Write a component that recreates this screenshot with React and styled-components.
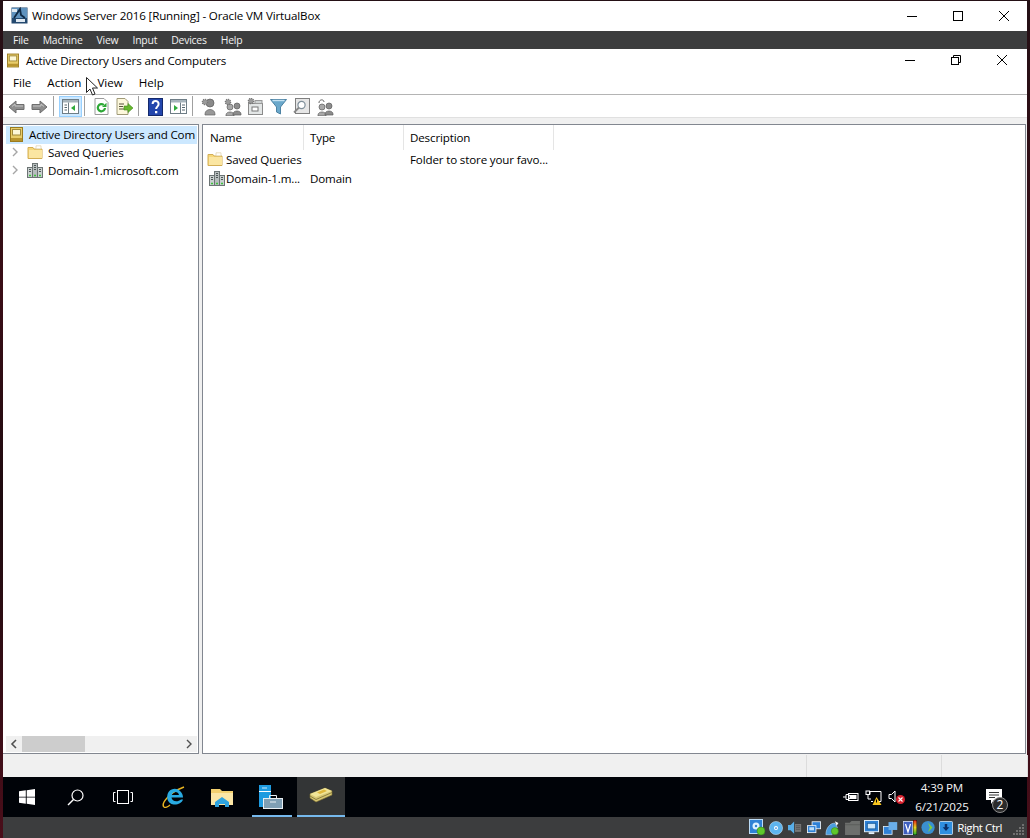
import React from 'react'
import styled, { createGlobalStyle } from 'styled-components'

const uiFont = '"Open Sans", "Noto Sans", "Liberation Sans", sans-serif'

const Global = createGlobalStyle`
  html, body { margin: 0; padding: 0; height: 100%; }
  body { background: #1c0a0e; font-family: ${uiFont}; overflow: hidden; }
  svg { flex: none; display: block; }
`

const Desktop = styled.div`
  width: 1030px;
  height: 838px;
  display: flex;
  justify-content: flex-start;
  padding: 1px 3px 0 3px;
  box-sizing: border-box;
  position: relative;
  background: linear-gradient(180deg, #241015 0%, #3a0d16 35%, #1d0b0f 60%, #4a0e1a 100%);
`

const Vm = styled.div`
  width: 1024px;
  height: 837px;
  display: flex;
  flex-direction: column;
  background: #fff;
`

const HostTitle = styled.div`
  height: 30px;
  flex: none;
  display: flex;
  align-items: center;
  padding: 0 0 1px 8px;
  box-sizing: border-box;
  background: #fff;
  color: #000;
  font-size: 11.6px;
  letter-spacing: -0.15px;
`

const TitleText = styled.span`
  margin-left: ${p => p.$gap}px;
  flex: 1;
  white-space: nowrap;
`

const WinButtons = styled.div`
  display: flex;
  align-items: center;
  margin-right: ${p => p.$right}px;
`

const WinButton = styled.span`
  width: ${p => p.$w}px;
  height: 20px;
  display: flex;
  align-items: center;
  justify-content: center;
`

const HostMenu = styled.div`
  height: 18px;
  flex: none;
  display: flex;
  align-items: center;
  padding-left: 3px;
  background: #3c3d3e;
  color: #f2f2f2;
  font-size: 10.4px;
  letter-spacing: -0.2px;
`

const HostMenuItem = styled.span`
  padding: 0 7px;
`

const MmcTitle = styled.div`
  height: 22px;
  flex: none;
  display: flex;
  align-items: center;
  padding-left: 4px;
  color: #000;
  font-size: 11.6px;
  letter-spacing: -0.15px;
`

const MmcMenu = styled.div`
  height: 24px;
  flex: none;
  display: flex;
  align-items: center;
  padding: 0 0 0 2px;
  border-bottom: 1px solid #b4b4b4;
  box-sizing: border-box;
  color: #000;
  font-size: 11.6px;
`

const MmcMenuItem = styled.span`
  padding: 0 8px;
`

const Toolbar = styled.div`
  height: 22px;
  flex: none;
  display: flex;
  align-items: flex-start;
  padding: 1px 0 0 2px;
  box-sizing: border-box;
  background: #fff;
`

const ToolButton = styled.span`
  width: 23px;
  height: 21px;
  display: flex;
  align-items: center;
  justify-content: center;
  box-sizing: border-box;
  border: 1px solid ${p => (p.$active ? '#99d1ff' : 'transparent')};
  background: ${p => (p.$active ? '#cce8ff' : 'transparent')};
`

const ToolSep = styled.span`
  width: 1px;
  height: 20px;
  margin: 0 5px 0 2px;
  background: #a0a0a0;
`

const Strip = styled.div`
  height: 6px;
  flex: none;
  background: #f0f0f0;
  border-top: 1px solid #e0e0e0;
`

const Panes = styled.div`
  flex: 1;
  min-height: 0;
  display: flex;
  gap: 3px;
  background: #f0f0f0;
`

const TreePane = styled.div`
  width: 196px;
  flex: none;
  display: flex;
  flex-direction: column;
  box-sizing: border-box;
  background: #fff;
  border: 1px solid #828790;
  border-left: none;
  padding: 0 1px 1px 3px;
`

const TreeBody = styled.div`
  flex: 1;
  min-height: 0;
  overflow: hidden;
  font-size: 11.6px;
  letter-spacing: -0.15px;
  color: #000;
`

const TreeRow = styled.div`
  height: 18px;
  display: flex;
  align-items: center;
  box-sizing: border-box;
  white-space: nowrap;
  overflow: hidden;
  padding: 0 0 2px ${p => p.$indent}px;
  background: ${p => (p.$selected ? '#cce8ff' : 'transparent')};
  margin-top: ${p => (p.$selected ? 1 : 0)}px;
`

const Chevron = styled.span`
  width: 8px;
  display: flex;
  margin-left: 5px;
  margin-right: 8px;
`

const RowLabel = styled.span`
  margin-left: ${p => p.$gap}px;
`

const HScroll = styled.div`
  height: 16px;
  flex: none;
  display: flex;
  align-items: center;
  justify-content: space-between;
  background: #f0f0f0;
`

const ScrollArrow = styled.span`
  width: 16px;
  display: flex;
  justify-content: center;
`

const ScrollTrack = styled.div`
  flex: 1;
  height: 16px;
`

const ScrollThumb = styled.div`
  width: 63px;
  height: 16px;
  background: #cdcdcd;
`

const ListPane = styled.div`
  flex: 1;
  min-width: 0;
  box-sizing: border-box;
  background: #fff;
  border: 1px solid #828790;
  margin-right: 1px;
  font-size: 11.6px;
  letter-spacing: -0.15px;
  color: #000;
`

const ListHeader = styled.div`
  height: 25px;
  display: flex;
`

const HeadCell = styled.div`
  width: ${p => p.$w}px;
  flex: none;
  box-sizing: border-box;
  padding: 5px 0 0 ${p => p.$pad}px;
  border-right: 1px solid #e5e5e5;
`

const ListRow = styled.div`
  height: 18px;
  display: flex;
  align-items: center;

  & + & {
    margin-top: 1px;
  }
`

const NameCell = styled.div`
  width: 100px;
  flex: none;
  display: flex;
  align-items: center;
  padding-left: ${p => p.$pad}px;
  box-sizing: border-box;
  white-space: nowrap;
`

const Cell = styled.div`
  width: ${p => p.$w}px;
  flex: none;
  box-sizing: border-box;
  padding-left: 7px;
  white-space: nowrap;
`

const StatusBar = styled.div`
  height: 23px;
  flex: none;
  display: flex;
  background: #f0f0f0;
  padding-top: 1px;
  box-sizing: border-box;
`

const StatusCell = styled.div`
  width: ${p => p.$w}px;
  flex: none;
  border-right: 1px solid #dcdcdc;
`

const Taskbar = styled.div`
  height: 40px;
  flex: none;
  display: flex;
  align-items: stretch;
  background: #000308;
  color: #fff;
`

const TaskButton = styled.span`
  width: 48px;
  flex: none;
  display: flex;
  align-items: center;
  justify-content: center;
  position: relative;
  box-sizing: border-box;
  margin-left: ${p => p.$ml || 0}px;
  background: ${p => (p.$active ? '#333536' : 'transparent')};
  border-bottom: 2px solid ${p => (p.$open ? '#76b9ed' : 'transparent')};
  padding-top: 2px;
`

const TaskOpenLine = styled.span`
  position: absolute;
  left: 5px;
  right: 3px;
  bottom: -2px;
  height: 2px;
  background: #76b9ed;
`

const Tray = styled.div`
  margin-left: auto;
  display: flex;
  align-items: center;
  padding-right: 18px;
`

const TrayIcon = styled.span`
  width: 23px;
  display: flex;
  justify-content: center;
`

const Clock = styled.div`
  width: 66px;
  margin: 0 4px 0 1px;
  text-align: center;
  font-size: 11.6px;
  letter-spacing: -0.15px;
  line-height: 19px;
  color: #f4f4f4;
`

const Notify = styled.span`
  position: relative;
  width: 30px;
  display: flex;
  justify-content: center;
`

const NotifyBadge = styled.span`
  position: absolute;
  left: 13px;
  top: 8px;
  width: 14px;
  height: 14px;
  border-radius: 50%;
  border: 1px solid #8c8c8c;
  background: #2b2b2b;
  color: #fff;
  font-size: 12px;
  line-height: 14px;
  text-align: center;
`

const HostStatus = styled.div`
  height: 21px;
  flex: none;
  display: flex;
  align-items: center;
  justify-content: flex-end;
  background: #3c3d3e;
  color: #fff;
  font-size: 11.6px;
  letter-spacing: -0.5px;
`

const HostIcon = styled.span`
  width: ${p => p.$w}px;
  margin-right: ${p => p.$mr || 0}px;
  display: flex;
  justify-content: center;
`

const HostKey = styled.span`
  margin: 0 10px 0 1px;
  white-space: nowrap;
`

const Grip = styled.span`
  width: 13px;
  height: 13px;
  margin: 6px 2px 0 0;
  display: flex;
`

const Pointer = styled.svg`
  position: absolute;
  left: 86px;
  top: 77px;
`

// ---- icons

const Min = () => (
  <svg width="12" height="12" viewBox="0 0 12 12"><path d="M1 6.500h10" stroke="#000" strokeWidth="1" /></svg>
)
const Max = () => (
  <svg width="12" height="12" viewBox="0 0 12 12"><rect x="1.500" y="1.500" width="9" height="9" fill="none" stroke="#000" /></svg>
)
const Restore = () => (
  <svg width="12" height="12" viewBox="0 0 12 12" fill="none" stroke="#000"><rect x="1.500" y="3.500" width="7" height="7" /><path d="M3.500 3.500v-2h7v7h-2" /></svg>
)
const Close = () => (
  <svg width="12" height="12" viewBox="0 0 12 12"><path d="M1 1l10 10M11 1L1 11" stroke="#000" /></svg>
)

const VBoxLogo = () => (
  <svg width="17" height="17" viewBox="0 0 17 17">
    <rect x="0.500" y="0.500" width="16" height="16" fill="#24496f" />
    <rect x="1" y="1" width="15" height="10" fill="#5f92be" />
    <path d="M3 11L9 2l1 6 4 3" stroke="#102a45" strokeWidth="1.800" fill="none" />
    <rect x="1" y="2" width="5" height="3" fill="#dfe9f2" />
    <rect x="5" y="12" width="9" height="3" fill="#dfe9f2" />
  </svg>
)

const AducBook = ({ w = 13, h = 15 }) => (
  <svg width={w} height={h} viewBox="0 0 13 15">
    <rect x="0.500" y="0.500" width="12" height="14" fill="#e8cd6a" stroke="#9a7b20" />
    <rect x="2.500" y="2.500" width="8" height="5.500" fill="#fdf8d8" stroke="#a08a3a" />
    <rect x="1" y="11" width="11" height="3" fill="#b8952e" />
  </svg>
)

const Folder = () => (
  <svg width="16" height="14" viewBox="0 0 16 14">
    <path d="M1 2.500h5l1 1.500h8v9.500H1z" fill="#f6d87a" stroke="#d3ae55" />
    <path d="M2 5h13v8H2z" fill="#fbe6a2" />
    <path d="M9 .8h5v3H9z" fill="#fff" stroke="#d6c79a" strokeWidth=".6" />
  </svg>
)

const DomainIcon = () => (
  <svg width="16" height="15" viewBox="0 0 16 15">
    <rect x="5.500" y="0.500" width="5" height="14" fill="#b6bdbd" stroke="#6c7474" />
    <rect x="0.500" y="4.500" width="5" height="10" fill="#c9d0cf" stroke="#6c7474" />
    <rect x="10.500" y="4.500" width="5" height="10" fill="#c9d0cf" stroke="#6c7474" />
    <path d="M2 6.500h2M2 8.500h2M7 2.500h2M7 4.500h2M7 6.500h2M12 6.500h2M12 8.500h2" stroke="#4d5656" />
    <path d="M2 12.500h2M7 12.500h2M12 12.500h2" stroke="#3fc43f" strokeWidth="1.400" />
  </svg>
)

const ChevronRight = ({ color = '#a6a6a6' }) => (
  <svg width="8" height="10" viewBox="0 0 8 10"><path d="M2 1l4 4-4 4" fill="none" stroke={color} strokeWidth="1.400" /></svg>
)
const ChevronLeft = ({ color = '#505050' }) => (
  <svg width="8" height="10" viewBox="0 0 8 10"><path d="M6 1L2 5l4 4" fill="none" stroke={color} strokeWidth="1.600" /></svg>
)

const BackArrow = ({ flip }) => (
  <svg width="17" height="14" viewBox="0 0 17 14" style={flip ? { transform: 'scaleX(-1)' } : undefined}>
    <path d="M1 7l7-6v3.500h8v5H8V13z" fill="#8e8e8e" stroke="#6e6e6e" />
    <path d="M4 6.500l3-2.500v2h8" fill="none" stroke="#c4c4c4" />
  </svg>
)

const ConsolePane = ({ side }) => (
  <svg width="17" height="15" viewBox="0 0 17 15">
    <rect x="0.500" y="0.500" width="16" height="14" fill="#fff" stroke="#6e7d86" />
    <rect x="1" y="1" width="15" height="2.500" fill="#a7b4bc" />
    {side === 'left' ? (
      <>
        <path d="M6.500 3.500v11" stroke="#6e7d86" />
        <path d="M2.500 6h2.500M2.500 8.500h2.500M2.500 11h2.500" stroke="#55656e" />
        <path d="M13 6v6L9 9z" fill="#2faa3c" />
      </>
    ) : (
      <>
        <path d="M10.500 3.500v11" stroke="#6e7d86" />
        <path d="M12 6h3M12 8.500h3M12 11h3" stroke="#55656e" />
        <path d="M4 6v6l4-3z" fill="#2faa3c" />
      </>
    )}
  </svg>
)

const Refresh = () => (
  <svg width="15" height="17" viewBox="0 0 15 17">
    <path d="M1 .5h9l4 4v12H1z" fill="#fff" stroke="#9a9a9a" />
    <path d="M11 10a3.600 3.600 0 1 1-1.200-3" fill="none" stroke="#2ea836" strokeWidth="2.200" />
    <path d="M8 9h4.500V4.800z" fill="#2ea836" />
  </svg>
)

const ExportList = () => (
  <svg width="18" height="17" viewBox="0 0 18 17">
    <path d="M1 .5h8l3 3v13H1z" fill="#fdf8dc" stroke="#a09a78" />
    <path d="M3 6h5M3 8.500h4M3 11h5" stroke="#55513a" />
    <path d="M8 8h4V5.500L17 10l-5 4.500V12H8z" fill="#68b82e" stroke="#3f8a1a" strokeWidth=".6" />
  </svg>
)

const HelpBook = () => (
  <svg width="15" height="18" viewBox="0 0 15 18">
    <rect x="0.500" y="0.500" width="14" height="17" fill="#2346ad" stroke="#14296b" />
    <path d="M4.600 6c0-4 6-4 6 0 0 2.600-2.500 2.600-2.500 5" fill="none" stroke="#fff" strokeWidth="2" />
    <rect x="7" y="13" width="2.300" height="2.300" fill="#fff" />
  </svg>
)

const UserGlyph = ({ x, y, fill }) => (
  <g transform={`translate(${x} ${y})`}>
    <circle cx="4" cy="3" r="3" fill={fill} stroke="#5c5c5c" strokeWidth=".7" />
    <path d="M0 11c0-4 8-4 8 0v1H0z" fill={fill} stroke="#5c5c5c" strokeWidth=".7" />
  </g>
)

const Gear = ({ x, y }) => (
  <g transform={`translate(${x} ${y})`}>
    <circle r="2.600" fill="#9c9c9c" stroke="#777" strokeDasharray="1.200 .8" strokeWidth="1.400" />
  </g>
)

const UserTool = () => (
  <svg width="17" height="18" viewBox="0 0 17 18">
    <circle cx="9" cy="5" r="4" fill="#8a8a8a" stroke="#5c5c5c" strokeWidth=".7" />
    <path d="M4 16c0-6 10-6 10 0v1H4z" fill="#989898" stroke="#666" strokeWidth=".7" />
    <Gear x={4} y={4} />
  </svg>
)

const GroupTool = () => (
  <svg width="18" height="18" viewBox="0 0 18 18">
    <UserGlyph x={2} y={6} fill="#a8a8a8" />
    <UserGlyph x={9} y={5} fill="#8c8c8c" />
    <Gear x={4} y={4} />
  </svg>
)

const OuTool = () => (
  <svg width="17" height="18" viewBox="0 0 17 18">
    <rect x="1.500" y="5.500" width="14" height="11" fill="#e3e6e6" stroke="#8a8a8a" />
    <rect x="5" y="9" width="6" height="4" fill="#fff" stroke="#777" />
    <rect x="8" y="2.500" width="7" height="3" fill="#d0d4d4" stroke="#999" />
    <Gear x={4} y={3} />
  </svg>
)

const Filter = () => (
  <svg width="17" height="17" viewBox="0 0 17 17">
    <path d="M.5 1.500h16L10.500 9v7l-4-2V9z" fill="#6aa8cb" stroke="#4d82a3" />
    <path d="M2.500 2.500h12" stroke="#c5e2f2" strokeWidth="1.400" />
  </svg>
)

const FindTool = () => (
  <svg width="17" height="17" viewBox="0 0 17 17">
    <rect x="2.500" y="0.500" width="14" height="15" fill="#e6e6e6" stroke="#7f7f7f" />
    <circle cx="8.500" cy="7" r="3.600" fill="#fff" stroke="#7f8f9a" strokeWidth="1.200" />
    <path d="M6 9.500L1 14.500" stroke="#888" strokeWidth="1.800" />
  </svg>
)

const MoveTool = () => (
  <svg width="18" height="18" viewBox="0 0 18 18">
    <path d="M3 5c0-4 5-4 5-1" fill="none" stroke="#666" />
    <UserGlyph x={2} y={6} fill="#a8a8a8" />
    <UserGlyph x={9} y={5} fill="#8c8c8c" />
  </svg>
)

const WindowsLogo = () => (
  <svg width="16" height="16" viewBox="0 0 16 16" fill="#fff">
    <path d="M0 2.300l6.800-1v6.400H0zM7.700 1.200L16 0v7.700H7.700zM0 8.400h6.800v6.300L0 13.700zM7.700 8.400H16V16l-8.300-1.200z" />
  </svg>
)

const SearchIcon = () => (
  <svg width="17" height="17" viewBox="0 0 17 17" fill="none" stroke="#fff">
    <circle cx="10.500" cy="6.500" r="5.500" strokeWidth="1.200" />
    <path d="M6.500 10.500L1 16" strokeWidth="1.500" />
  </svg>
)

const TaskViewIcon = () => (
  <svg width="20" height="14" viewBox="0 0 20 14" fill="none" stroke="#fff">
    <rect x="4.500" y="0.500" width="11" height="13" />
    <path d="M2.500 2.500H.5v9h2M17.500 2.500h2v9h-2" />
  </svg>
)

const IeIcon = () => (
  <svg width="24" height="24" viewBox="0 0 24 24">
    <path d="M2 22c-3-3 4-14 20-20" fill="none" stroke="#e9b521" strokeWidth="1.500" />
    <path d="M21 12.500H9.500c.3 4 6 5 9.500 2h2c-2 6-13 7.500-15.500 0C3.500 5 13 1 18 6c2 2 3 4 3 6.500zM9.800 10H17c-.5-4-6.500-4-7.200 0z" fill="#29abe2" fillRule="evenodd" />
    <path d="M2 22c1 1 4 0 6-2" fill="none" stroke="#e9b521" strokeWidth="1.200" />
  </svg>
)

const ExplorerIcon = () => (
  <svg width="22" height="19" viewBox="0 0 22 19">
    <path d="M0 1h9l2 2h11v14H0z" fill="#f3d06f" />
    <path d="M0 5h22v12H0z" fill="#fbe6a6" />
    <path d="M4 19v-5h14v5h-4v-3H8v3zM4 14l7-5 7 5z" fill="#2fa4e0" />
  </svg>
)

const ServerManagerIcon = () => (
  <svg width="24" height="24" viewBox="0 0 24 24">
    <rect x="0" y="0" width="12" height="22" fill="#1e9be0" />
    <path d="M0 6.500h12" stroke="#fff" />
    <rect x="3" y="2.500" width="5" height="1" fill="#cfeafa" />
    <rect x="4.500" y="13.500" width="19" height="10" fill="#7f9fb4" stroke="#e8eef2" />
    <path d="M10.500 13v-2.500h7V13M11 17h6" fill="none" stroke="#e8eef2" />
  </svg>
)

const AducTask = () => (
  <svg width="24" height="16" viewBox="0 0 24 16" style={{ marginTop: -5 }}>
    <path d="M1 7L16 1l7 3v4L7 15l-6-4z" fill="#d8c874" stroke="#7d6f30" strokeWidth=".6" />
    <path d="M1 7l6 3 16-6-7-3z" fill="#f1e598" />
    <path d="M8 5.500l7-3 3 1.500-7 3z" fill="#e0b83c" />
    <path d="M1 9l6 3.500 16-7" fill="none" stroke="#8f8140" />
  </svg>
)

const PlugBattery = () => (
  <svg width="16" height="12" viewBox="0 0 16 12">
    <path d="M0 6h3M3 3.500h3v5H3zM6 4.500h1M6 7.500h1" stroke="#fff" fill="none" />
    <rect x="5.500" y="2.500" width="9.500" height="7" fill="none" stroke="#fff" />
    <rect x="7" y="4" width="6.500" height="4" fill="#fff" />
  </svg>
)

const NetworkWarn = () => (
  <svg width="17" height="15" viewBox="0 0 17 15">
    <path d="M5 1.500h11v10h-4M5 1.500v3M8 11.500H6" fill="none" stroke="#fff" />
    <rect x="1" y="1" width="3.500" height="3.500" fill="none" stroke="#fff" />
    <path d="M3 5v4h3" fill="none" stroke="#fff" />
    <path d="M11.500 7l5 8h-9z" fill="#f7c51e" />
    <path d="M11.500 9.500v3" stroke="#000" />
  </svg>
)

const MutedSpeaker = () => (
  <svg width="17" height="14" viewBox="0 0 17 14">
    <path d="M1 4.500h2.500L7 1v11L3.500 8.500H1z" fill="none" stroke="#fff" />
    <circle cx="12.500" cy="9.500" r="4.500" fill="#d8232f" />
    <path d="M10.500 7.500l4 4M14.500 7.500l-4 4" stroke="#fff" strokeWidth="1.100" />
  </svg>
)

const ActionCenter = () => (
  <svg width="17" height="16" viewBox="0 0 17 16">
    <path d="M0 0h16v11H8l-3 4v-4H0z" fill="#fff" />
    <path d="M3 3.500h10M3 6h10M3 8.500h6" stroke="#333" />
  </svg>
)

const GreenDot = ({ x, y }) => <circle cx={x} cy={y} r="4" fill="#5ec72c" stroke="#2f7d17" strokeWidth=".5" />

const DiskIcon = () => (
  <svg width="17" height="17" viewBox="0 0 17 17">
    <rect x="0.500" y="0.500" width="13" height="14" fill="#2f81d6" stroke="#bcdcf7" />
    <circle cx="7" cy="7" r="3.500" fill="#dcefff" />
    <circle cx="7" cy="7" r="1.200" fill="#2f81d6" />
    <GreenDot x={12} y={12} />
  </svg>
)
const OpticalIcon = () => (
  <svg width="14" height="14" viewBox="0 0 16 16">
    <circle cx="8" cy="8" r="7.500" fill="#5db4ef" stroke="#cfe9fb" strokeWidth=".6" />
    <circle cx="8" cy="8" r="2.300" fill="#fff" />
    <circle cx="8" cy="8" r="1" fill="#2f81d6" />
  </svg>
)
const AudioHost = () => (
  <svg width="14" height="15" viewBox="0 0 16 16">
    <path d="M0 5h3l4-4v14l-4-4H0z" fill="#58aee8" />
    <rect x="8" y="4" width="7" height="9" fill="#777" />
    <path d="M9 6h5M9 8h5M9 10h5" stroke="#555" />
  </svg>
)
const NetHost = () => (
  <svg width="14" height="14" viewBox="0 0 18 17">
    <rect x="6.500" y="0.500" width="11" height="9" fill="#2f81d6" stroke="#fff" />
    <rect x="0.500" y="5.500" width="11" height="9" fill="#2f81d6" stroke="#fff" />
    <rect x="3" y="7.500" width="6" height="4" fill="#bfe0fa" />
  </svg>
)
const UsbHost = () => (
  <svg width="17" height="16" viewBox="0 0 19 17">
    <path d="M1 16C1 8 6 3 11 3l3 5c-3 0-6 3-6 8z" fill="#4a9de0" stroke="#bcdcf7" strokeWidth=".6" />
    <path d="M11 1l4 2-2 3z" fill="#fff" />
    <GreenDot x={11} y={12} />
  </svg>
)
const GreyFolder = () => (
  <svg width="15" height="14" viewBox="0 0 16 15">
    <path d="M0 2h5l2-2h9v15H0z" fill="#6d6f6d" />
    <path d="M0 4h16" stroke="#5a5c5a" />
  </svg>
)
const ScreenHost = () => (
  <svg width="15" height="15" viewBox="0 0 16 16">
    <rect x="0.500" y="0.500" width="15" height="12" fill="#2f81d6" stroke="#e5f2fc" />
    <rect x="3.500" y="3.500" width="9" height="6" fill="#cfe6f9" stroke="#1b5f9f" />
    <rect x="5" y="13" width="6" height="2" fill="#e5f2fc" />
  </svg>
)
const CaptureHost = () => (
  <svg width="15" height="14" viewBox="0 0 19 17">
    <rect x="0.500" y="6.500" width="11" height="10" fill="#2f81d6" stroke="#e5f2fc" />
    <rect x="7" y="1" width="11" height="10" fill="#6aaee8" />
  </svg>
)
const VtHost = () => (
  <svg width="10" height="14" viewBox="0 0 14 16" preserveAspectRatio="none">
    <rect x="0.500" y="0.500" width="13" height="15" fill="#3f5fbf" stroke="#ccd5f2" />
    <path d="M3.500 3.500l3.500 9 3.500-9" fill="none" stroke="#fff" strokeWidth="1.800" />
  </svg>
)
const Meter = () => (
  <svg width="4" height="15" viewBox="0 0 4 16" preserveAspectRatio="none">
    <defs>
      <linearGradient id="meter" x1="0" y1="0" x2="0" y2="1">
        <stop offset="0" stopColor="#e0201c" />
        <stop offset=".5" stopColor="#e8d020" />
        <stop offset="1" stopColor="#20b030" />
      </linearGradient>
    </defs>
    <rect width="4" height="16" fill="url(#meter)" stroke="#000" strokeWidth=".8" />
  </svg>
)
const GlobeHost = () => (
  <svg width="15" height="15" viewBox="0 0 17 17">
    <circle cx="8" cy="8.500" r="7.500" fill="#3a8fd0" />
    <path d="M8 3l5 5.500L8 14l2-5.500z" fill="#7fd03c" />
  </svg>
)
const KeyHost = () => (
  <svg width="14" height="14" viewBox="0 0 17 17">
    <rect x="0.500" y="0.500" width="16" height="16" rx="1.500" fill="#2f8fe0" stroke="#d8ecfb" />
    <path d="M7 3.500h3v4h2.500l-4 4.500-4-4.500H7z" fill="#0c2f66" />
  </svg>
)
const GripDots = () => (
  <svg width="13" height="13" viewBox="0 0 13 13" fill="#707070">
    <rect x="10" y="0" width="2" height="2" /><rect x="7" y="3" width="2" height="2" /><rect x="10" y="3" width="2" height="2" />
    <rect x="4" y="6" width="2" height="2" /><rect x="7" y="6" width="2" height="2" /><rect x="10" y="6" width="2" height="2" />
    <rect x="1" y="9" width="2" height="2" /><rect x="4" y="9" width="2" height="2" /><rect x="7" y="9" width="2" height="2" /><rect x="10" y="9" width="2" height="2" />
  </svg>
)

const hostMenu = ['File', 'Machine', 'View', 'Input', 'Devices', 'Help']
const mmcMenu = ['File', 'Action', 'View', 'Help']

export default function App() {
  return (
    <Desktop>
      <Global />
      <Vm>
        <HostTitle>
          <VBoxLogo />
          <TitleText $gap={4}>Windows Server 2016 [Running] - Oracle VM VirtualBox</TitleText>
          <WinButtons $right={0}>
            <WinButton $w={46}><Min /></WinButton>
            <WinButton $w={46}><Max /></WinButton>
            <WinButton $w={46}><Close /></WinButton>
          </WinButtons>
        </HostTitle>
        <HostMenu>
          {hostMenu.map(m => <HostMenuItem key={m}>{m}</HostMenuItem>)}
        </HostMenu>
        <MmcTitle>
          <AducBook w={12} h={15} />
          <TitleText $gap={7}>Active Directory Users and Computers</TitleText>
          <WinButtons $right={2}>
            <WinButton $w={46}><Min /></WinButton>
            <WinButton $w={46}><Restore /></WinButton>
            <WinButton $w={46}><Close /></WinButton>
          </WinButtons>
        </MmcTitle>
        <MmcMenu>
          {mmcMenu.map(m => <MmcMenuItem key={m}>{m}</MmcMenuItem>)}
        </MmcMenu>
        <Toolbar>
          <ToolButton><BackArrow /></ToolButton>
          <ToolButton><BackArrow flip /></ToolButton>
          <ToolSep />
          <ToolButton $active><ConsolePane side="left" /></ToolButton>
          <ToolSep />
          <ToolButton><Refresh /></ToolButton>
          <ToolButton><ExportList /></ToolButton>
          <ToolSep />
          <ToolButton><HelpBook /></ToolButton>
          <ToolButton><ConsolePane side="right" /></ToolButton>
          <ToolSep />
          <ToolButton><UserTool /></ToolButton>
          <ToolButton><GroupTool /></ToolButton>
          <ToolButton><OuTool /></ToolButton>
          <ToolButton><Filter /></ToolButton>
          <ToolButton><FindTool /></ToolButton>
          <ToolButton><MoveTool /></ToolButton>
        </Toolbar>
        <Strip />
        <Panes>
          <TreePane>
            <TreeBody>
              <TreeRow $selected $indent={4}>
                <AducBook />
                <RowLabel $gap={6}>Active Directory Users and Com</RowLabel>
              </TreeRow>
              <TreeRow $indent={0}>
                <Chevron><ChevronRight /></Chevron>
                <Folder />
                <RowLabel $gap={5}>Saved Queries</RowLabel>
              </TreeRow>
              <TreeRow $indent={0}>
                <Chevron><ChevronRight /></Chevron>
                <DomainIcon />
                <RowLabel $gap={5}>Domain-1.microsoft.com</RowLabel>
              </TreeRow>
            </TreeBody>
            <HScroll>
              <ScrollArrow><ChevronLeft /></ScrollArrow>
              <ScrollTrack><ScrollThumb /></ScrollTrack>
              <ScrollArrow><ChevronRight color="#505050" /></ScrollArrow>
            </HScroll>
          </TreePane>
          <ListPane>
            <ListHeader>
              <HeadCell $w={101} $pad={7}>Name</HeadCell>
              <HeadCell $w={100} $pad={6}>Type</HeadCell>
              <HeadCell $w={150} $pad={6}>Description</HeadCell>
            </ListHeader>
            <ListRow>
              <NameCell $pad={4}><Folder /><RowLabel $gap={3}>Saved Queries</RowLabel></NameCell>
              <Cell $w={100} />
              <Cell $w={150}>Folder to store your favo...</Cell>
            </ListRow>
            <ListRow>
              <NameCell $pad={6}><DomainIcon /><RowLabel $gap={1}>Domain-1.m...</RowLabel></NameCell>
              <Cell $w={100}>Domain</Cell>
              <Cell $w={150} />
            </ListRow>
          </ListPane>
        </Panes>
        <StatusBar>
          <StatusCell $w={803} />
          <StatusCell $w={134} />
          <StatusCell $w={85} />
        </StatusBar>
        <Taskbar>
          <TaskButton><WindowsLogo /></TaskButton>
          <TaskButton><SearchIcon /></TaskButton>
          <TaskButton><TaskViewIcon /></TaskButton>
          <TaskButton $ml={3}><IeIcon /></TaskButton>
          <TaskButton><ExplorerIcon /></TaskButton>
          <TaskButton $ml={1}><ServerManagerIcon /><TaskOpenLine /></TaskButton>
          <TaskButton $ml={2} $active $open><AducTask /></TaskButton>
          <Tray>
            <TrayIcon><PlugBattery /></TrayIcon>
            <TrayIcon><NetworkWarn /></TrayIcon>
            <TrayIcon><MutedSpeaker /></TrayIcon>
            <Clock>4:39 PM<br />6/21/2025</Clock>
            <Notify>
              <ActionCenter />
              <NotifyBadge>2</NotifyBadge>
            </Notify>
          </Tray>
        </Taskbar>
        <HostStatus>
          <HostIcon $w={16} $mr={4}><DiskIcon /></HostIcon>
          <HostIcon $w={14} $mr={5}><OpticalIcon /></HostIcon>
          <HostIcon $w={14} $mr={5}><AudioHost /></HostIcon>
          <HostIcon $w={14} $mr={4}><NetHost /></HostIcon>
          <HostIcon $w={17} $mr={2}><UsbHost /></HostIcon>
          <HostIcon $w={16} $mr={3}><GreyFolder /></HostIcon>
          <HostIcon $w={16} $mr={3}><ScreenHost /></HostIcon>
          <HostIcon $w={16} $mr={4}><CaptureHost /></HostIcon>
          <HostIcon $w={11}><VtHost /></HostIcon>
          <HostIcon $w={4} $mr={4}><Meter /></HostIcon>
          <HostIcon $w={15}><GlobeHost /></HostIcon>
          <HostIcon $w={20}><KeyHost /></HostIcon>
          <HostKey>Right Ctrl</HostKey>
          <Grip><GripDots /></Grip>
        </HostStatus>
      </Vm>
      <Pointer width="13" height="20" viewBox="0 0 13 20">
        <path d="M.5.500v15l3.500-3.500 2.500 6 2.500-1-2.500-6h5z" fill="#fff" stroke="#222" />
      </Pointer>
    </Desktop>
  )
}
